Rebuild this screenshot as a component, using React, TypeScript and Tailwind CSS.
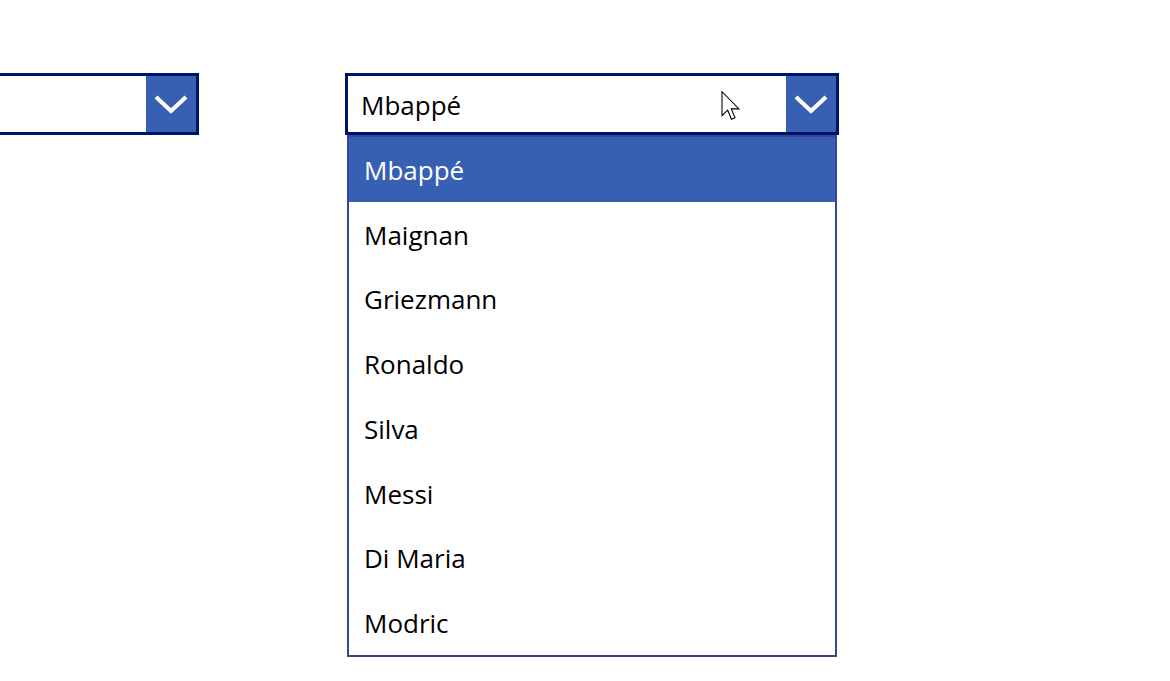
import React from "react";

const items = ["Mbappé", "Maignan", "Griezmann", "Ronaldo", "Silva", "Messi", "Di Maria", "Modric"];

function Chevron() {
  return (
    <svg width="34" height="20" viewBox="0 0 34 20" fill="none">
      <path d="M2 3 L17 17 L32 3" stroke="white" strokeWidth="4.2" strokeLinecap="butt" strokeLinejoin="miter" />
    </svg>
  );
}

function Cursor() {
  return (
    <svg width="20" height="30" viewBox="0 0 13 20" className="absolute left-[721px] top-[91px]">
      <path
        d="M0.5 0.5 L0.5 16.5 L4.3 12.8 L6.8 18.8 L9.2 17.8 L6.7 11.9 L11.8 11.9 Z"
        fill="white"
        stroke="black"
        strokeWidth="0.7"
        strokeLinejoin="miter"
      />
    </svg>
  );
}

export default function App() {
  const font = { fontFamily: '"Open Sans", "Noto Sans", sans-serif' };
  return (
    <div className="relative w-full h-[681px] bg-white overflow-hidden" style={font}>
      <div className="flex items-start pt-[73px] gap-[146px]">
        <div className="shrink-0 w-[494px] ml-[-295px] h-[62px] border-[3px] border-[#00126B] flex bg-white">
          <div className="flex-1" />
          <div className="w-[50px] h-full bg-[#3860B2] flex items-center justify-center">
            <Chevron />
          </div>
        </div>
        <div className="shrink-0 w-[494px] flex flex-col">
          <div className="h-[62px] border-[3px] border-[#00126B] flex bg-white">
            <div className="flex-1 flex items-center pl-[13px] pt-[1px] text-[26px] text-black leading-none">Mbappé</div>
            <div className="w-[50px] h-full bg-[#3860B2] flex items-center justify-center">
              <Chevron />
            </div>
          </div>
          <div className="mx-[2px] border-2 border-[#34459a] bg-white">
            {items.map((name, i) => (
              <div
                key={name}
                className={
                  i === 0
                    ? "h-[64.75px] flex items-center pl-[15px] pt-[1px] text-[26px] leading-none bg-[#3860B2] text-white"
                    : "h-[64.75px] flex items-center pl-[15px] pt-[1px] text-[26px] leading-none bg-white text-black"
                }
              >
                {name}
              </div>
            ))}
          </div>
        </div>
      </div>
      <Cursor />
    </div>
  );
}
